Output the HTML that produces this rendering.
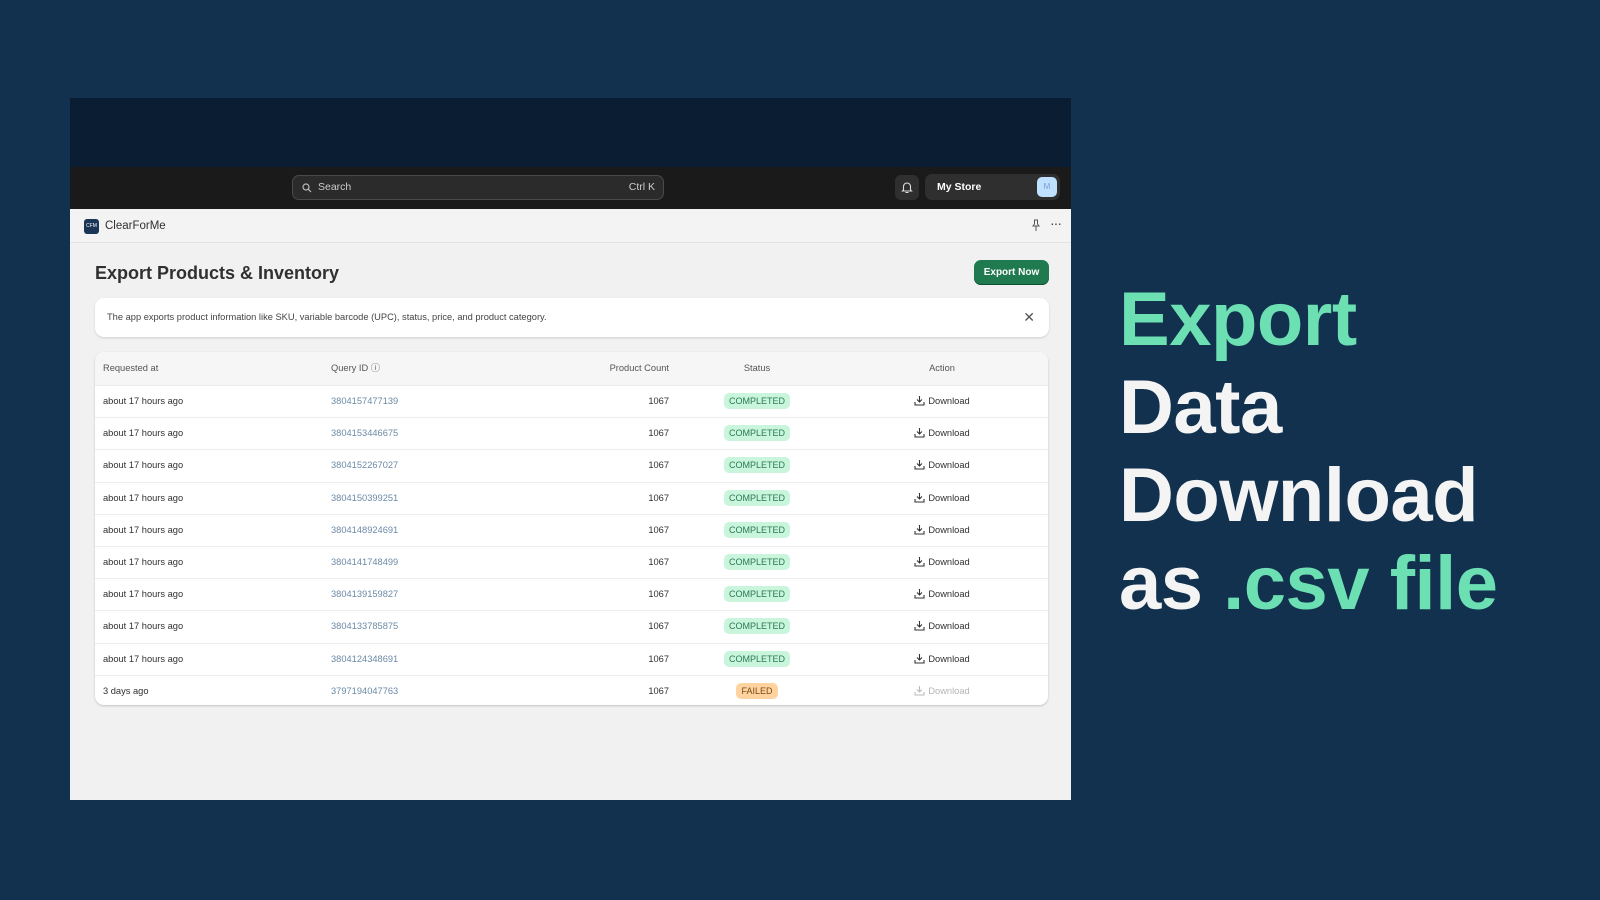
<!DOCTYPE html>
<html><head><meta charset="utf-8"><style>
*{box-sizing:border-box;margin:0;padding:0}
body{width:1600px;height:900px;background:#12314f;font-family:"Liberation Sans",sans-serif;position:relative;overflow:hidden}
.panel{position:absolute;left:70px;top:98px;width:1001px;height:702px;background:#f1f1f1;overflow:hidden}
.topband{position:absolute;left:0;top:0;width:100%;height:69px;background:#0b1d33}
.hdr{position:absolute;left:0;top:69px;width:100%;height:42px;background:#1a1a1a}
.search{position:absolute;left:222px;top:8px;width:372px;height:25px;border:1px solid #4a4a4a;border-radius:7px;background:#2b2b2b;color:#ccc;font-size:10.5px;line-height:23px;padding-left:25px}
.search .k{position:absolute;right:8px;top:0}
.bell{position:absolute;left:825px;top:8px;width:24px;height:25px;background:#2f2f2f;border-radius:6px}
.store{position:absolute;left:855px;top:7px;width:135px;height:26px;background:#2f2f2f;border-radius:7px;color:#fff;font-weight:bold;font-size:10.5px;line-height:26px;padding-left:12px}
.av{position:absolute;right:3px;top:3px;width:20px;height:20px;border-radius:5px;background:#bfe0ff;color:#7a9ed0;font-size:8px;text-align:center;line-height:20px;font-weight:normal}
.appbar{position:absolute;left:0;top:111px;width:100%;height:34px;border-bottom:1px solid #e3e3e3;background:#f3f3f3}
.logo{position:absolute;left:14px;top:10px;width:15px;height:15px;background:#1b3557;border-radius:3px;color:#fff;font-size:5px;text-align:center;line-height:15px}
.appname{position:absolute;left:35px;top:11px;font-size:11.5px;color:#303030}
h1{position:absolute;left:25px;top:165px;font-size:18px;color:#303030}
.btn{position:absolute;left:904px;top:162px;width:75px;height:25px;background:#1f7a4f;border-radius:7px;color:#fff;font-size:10px;font-weight:bold;text-align:center;line-height:25px;box-shadow:inset 0 -1px 0 #0f5131}
.banner{position:absolute;left:25px;top:200px;width:954px;height:39px;background:#fff;border-radius:9px;box-shadow:0 1px 2px rgba(0,0,0,.15);font-size:9.3px;color:#444;line-height:39px;padding-left:12px}
.banner .x{position:absolute;right:14px;top:0;font-size:14px;color:#555}
.table{position:absolute;left:25px;top:254px;width:953px;height:353px;background:#fff;border-radius:9px;box-shadow:0 1px 2px rgba(0,0,0,.2);overflow:hidden;font-size:9.3px;color:#303030}
.row{position:absolute;left:0;width:100%;height:32.2px;border-top:1px solid #ececec;line-height:31px}
.row.h{top:0;background:#f6f6f6;border-top:none;height:33px;line-height:33px;color:#555}
.c1{position:absolute;left:8px}.c2{position:absolute;left:236px;color:#6b8aa6}
.c3{position:absolute;right:379px}.c4{position:absolute;left:612px;width:100px;text-align:center}
.c5{position:absolute;left:797px;width:100px;text-align:center}
.h .c2{color:#555}
.badge{display:inline-block;background:#c9f5dd;color:#2a7a50;border-radius:5px;padding:0 5px;line-height:16px;font-size:9px}
.badge.f{background:#ffd3a0;color:#7a4a10}
.dl svg{vertical-align:-2px;margin-right:3px}
.dis{color:#b5b5b5}
.big{position:absolute;left:1119px;font-size:76px;font-weight:bold;line-height:88px;color:#f4f4f4;top:276px;letter-spacing:-0.5px}
.g{color:#6cdfb3}
</style></head><body>
<div class="panel">
<div class="topband"></div>
<div class="hdr">
<div class="search"><svg style="position:absolute;left:9px;top:7px" width="10" height="10" viewBox="0 0 10 10"><circle cx="4" cy="4" r="3" fill="none" stroke="#bbb" stroke-width="1.2"/><path d="M6.3 6.3L9 9" stroke="#bbb" stroke-width="1.2"/></svg>Search<span class="k">Ctrl K</span></div>
<div class="bell"><svg style="position:absolute;left:6px;top:6px" width="12" height="13" viewBox="0 0 12 13"><path d="M2.5 9V5.5a3.5 3.5 0 0 1 7 0V9l1 1H1.5z M4.5 11.5h3" fill="none" stroke="#ddd" stroke-width="1.1"/></svg></div>
<div class="store">My Store<div class="av">M</div></div>
</div>
<div class="appbar"><div class="logo">CFM</div><div class="appname">ClearForMe</div>
<svg style="position:absolute;left:961px;top:10px" width="10" height="13" viewBox="0 0 10 13"><path d="M3 1h4M3.5 1v4L2 7h6L6.5 5V1M5 7v5" fill="none" stroke="#555" stroke-width="1"/></svg>
<div style="position:absolute;left:980px;top:6px;font-size:14px;color:#444;letter-spacing:-1px">···</div></div>
<h1>Export Products &amp; Inventory</h1>
<div class="btn">Export Now</div>
<div class="banner">The app exports product information like SKU, variable barcode (UPC), status, price, and product category.<span class="x">✕</span></div>
<div class="table">
<div class="row h"><span class="c1">Requested at</span><span class="c2">Query ID ⓘ</span><span class="c3">Product Count</span><span class="c4">Status</span><span class="c5">Action</span></div>
<div class="row" style="top:33px"><span class="c1">about 17 hours ago</span><span class="c2">3804157477139</span><span class="c3">1067</span><span class="c4"><span class="badge">COMPLETED</span></span><span class="c5 dl"><svg width="11" height="11" viewBox="0 0 11 11"><path d="M5.5 1v6M3 4.5l2.5 2.5L8 4.5M1 7v3h9V7" fill="none" stroke="#333" stroke-width="1.1"/></svg>Download</span></div>
<div class="row" style="top:65.2px"><span class="c1">about 17 hours ago</span><span class="c2">3804153446675</span><span class="c3">1067</span><span class="c4"><span class="badge">COMPLETED</span></span><span class="c5 dl"><svg width="11" height="11" viewBox="0 0 11 11"><path d="M5.5 1v6M3 4.5l2.5 2.5L8 4.5M1 7v3h9V7" fill="none" stroke="#333" stroke-width="1.1"/></svg>Download</span></div>
<div class="row" style="top:97.4px"><span class="c1">about 17 hours ago</span><span class="c2">3804152267027</span><span class="c3">1067</span><span class="c4"><span class="badge">COMPLETED</span></span><span class="c5 dl"><svg width="11" height="11" viewBox="0 0 11 11"><path d="M5.5 1v6M3 4.5l2.5 2.5L8 4.5M1 7v3h9V7" fill="none" stroke="#333" stroke-width="1.1"/></svg>Download</span></div>
<div class="row" style="top:129.6px"><span class="c1">about 17 hours ago</span><span class="c2">3804150399251</span><span class="c3">1067</span><span class="c4"><span class="badge">COMPLETED</span></span><span class="c5 dl"><svg width="11" height="11" viewBox="0 0 11 11"><path d="M5.5 1v6M3 4.5l2.5 2.5L8 4.5M1 7v3h9V7" fill="none" stroke="#333" stroke-width="1.1"/></svg>Download</span></div>
<div class="row" style="top:161.8px"><span class="c1">about 17 hours ago</span><span class="c2">3804148924691</span><span class="c3">1067</span><span class="c4"><span class="badge">COMPLETED</span></span><span class="c5 dl"><svg width="11" height="11" viewBox="0 0 11 11"><path d="M5.5 1v6M3 4.5l2.5 2.5L8 4.5M1 7v3h9V7" fill="none" stroke="#333" stroke-width="1.1"/></svg>Download</span></div>
<div class="row" style="top:194px"><span class="c1">about 17 hours ago</span><span class="c2">3804141748499</span><span class="c3">1067</span><span class="c4"><span class="badge">COMPLETED</span></span><span class="c5 dl"><svg width="11" height="11" viewBox="0 0 11 11"><path d="M5.5 1v6M3 4.5l2.5 2.5L8 4.5M1 7v3h9V7" fill="none" stroke="#333" stroke-width="1.1"/></svg>Download</span></div>
<div class="row" style="top:226.2px"><span class="c1">about 17 hours ago</span><span class="c2">3804139159827</span><span class="c3">1067</span><span class="c4"><span class="badge">COMPLETED</span></span><span class="c5 dl"><svg width="11" height="11" viewBox="0 0 11 11"><path d="M5.5 1v6M3 4.5l2.5 2.5L8 4.5M1 7v3h9V7" fill="none" stroke="#333" stroke-width="1.1"/></svg>Download</span></div>
<div class="row" style="top:258.4px"><span class="c1">about 17 hours ago</span><span class="c2">3804133785875</span><span class="c3">1067</span><span class="c4"><span class="badge">COMPLETED</span></span><span class="c5 dl"><svg width="11" height="11" viewBox="0 0 11 11"><path d="M5.5 1v6M3 4.5l2.5 2.5L8 4.5M1 7v3h9V7" fill="none" stroke="#333" stroke-width="1.1"/></svg>Download</span></div>
<div class="row" style="top:290.6px"><span class="c1">about 17 hours ago</span><span class="c2">3804124348691</span><span class="c3">1067</span><span class="c4"><span class="badge">COMPLETED</span></span><span class="c5 dl"><svg width="11" height="11" viewBox="0 0 11 11"><path d="M5.5 1v6M3 4.5l2.5 2.5L8 4.5M1 7v3h9V7" fill="none" stroke="#333" stroke-width="1.1"/></svg>Download</span></div>
<div class="row" style="top:322.8px"><span class="c1">3 days ago</span><span class="c2">3797194047763</span><span class="c3">1067</span><span class="c4"><span class="badge f">FAILED</span></span><span class="c5 dl dis"><svg width="11" height="11" viewBox="0 0 11 11"><path d="M5.5 1v6M3 4.5l2.5 2.5L8 4.5M1 7v3h9V7" fill="none" stroke="#bbb" stroke-width="1.1"/></svg>Download</span></div>
</div>
</div>
<div class="big"><span class="g">Export</span><br>Data<br>Download<br>as <span class="g">.csv file</span></div>
</body></html>
